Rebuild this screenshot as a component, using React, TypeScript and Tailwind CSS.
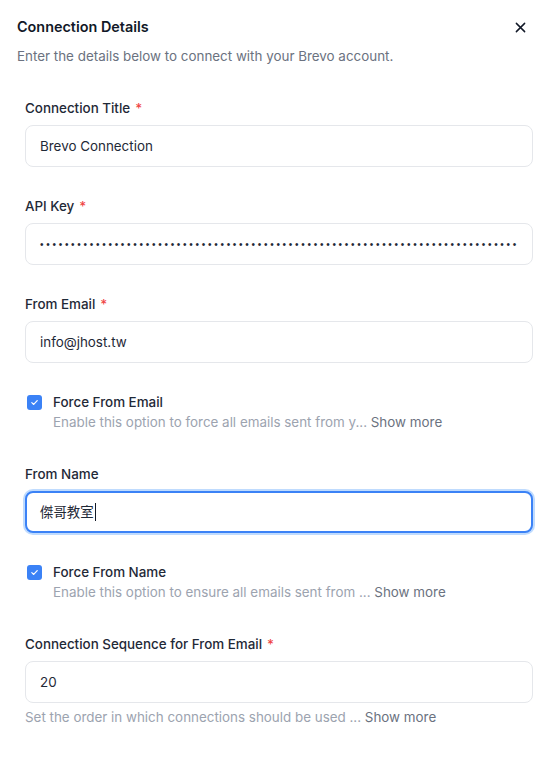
import React from "react";

const font = { fontFamily: "Inter, 'Noto Sans CJK TC', sans-serif" };

function Label({ text, required }: { text: string; required?: boolean }) {
  return (
    <div className="text-[13.4px] leading-5 font-[450] text-[#1f2937] mb-[7px]">
      {text}
      {required && <span className="text-[#ef4444] ml-[5px]">*</span>}
    </div>
  );
}

function Input({ value }: { value: string }) {
  return (
    <div className="h-[42px] rounded-[8px] border border-[#e5e7eb] bg-white px-[14px] flex items-center text-[13.4px] text-[#1f2937]">
      {value}
    </div>
  );
}

function Check({ title, desc }: { title: string; desc: string }) {
  return (
    <div className="flex items-start gap-[11px] pl-[2px]">
      <div className="mt-[3px] w-[15px] h-[15px] rounded-[3px] bg-[#3b82f6] flex items-center justify-center shrink-0">
        <svg width="9" height="9" viewBox="0 0 10 10" fill="none">
          <path d="M2 5.2 L4.1 7.2 L8 2.8" stroke="white" strokeWidth="1.3" strokeLinecap="round" strokeLinejoin="round" />
        </svg>
      </div>
      <div>
        <div className="text-[13.4px] leading-5 font-[450] text-[#1f2937]">{title}</div>
        <div className="text-[13.4px] leading-5 text-[#9ca3af]">
          {desc} <span className="text-[#6b7280]">Show more</span>
        </div>
      </div>
    </div>
  );
}

export default function App() {
  return (
    <div className="w-[552px] h-[760px] bg-white overflow-hidden" style={font}>
      <div className="pl-[17px] pr-[26px] pt-[17px]">
        <div className="flex items-center justify-between h-5">
          <div className="text-[14.4px] font-semibold text-[#111827]">Connection Details</div>
          <svg width="11" height="11" viewBox="0 0 12 12" fill="none">
            <path d="M1.5 1.5 L10.5 10.5 M10.5 1.5 L1.5 10.5" stroke="#111827" strokeWidth="1.6" strokeLinecap="round" />
          </svg>
        </div>
        <div className="mt-[9px] text-[13.4px] leading-5 text-[#6b7280]">
          Enter the details below to connect with your Brevo account.
        </div>
      </div>
      <div className="pl-[25px] pr-[19px] pt-[32px] flex flex-col gap-[29px]">
        <div>
          <Label text="Connection Title" required />
          <Input value="Brevo Connection" />
        </div>
        <div>
          <Label text="API Key" required />
          <div className="h-[42px] rounded-[8px] border border-[#e5e7eb] bg-white pl-[14px] pr-[10px] flex items-center overflow-hidden">
            <div className="whitespace-nowrap text-[#1f2937] text-[10px] tracking-[2.72px]" style={{ fontFamily: "'Liberation Sans', sans-serif" }}>
              {"•".repeat(77)}
            </div>
          </div>
        </div>
        <div>
          <Label text="From Email" required />
          <Input value="info@jhost.tw" />
        </div>
        <Check
          title="Force From Email"
          desc="Enable this option to force all emails sent from y..."
        />
        <div className="mt-[3px]">
          <Label text="From Name" />
          <div className="h-[42px] rounded-[8px] border-2 border-[#3b82f6] ring-2 ring-[#bfdbfe] bg-white px-[13px] flex items-center text-[13.4px] text-[#1f2937]">
            傑哥教室<span className="inline-block w-px h-[18px] bg-[#111827] ml-[1px]" />
          </div>
        </div>
        <Check
          title="Force From Name"
          desc="Enable this option to ensure all emails sent from ..."
        />
        <div className="mt-[3px]">
          <Label text="Connection Sequence for From Email" required />
          <Input value="20" />
          <div className="mt-[4px] text-[13.4px] leading-5 text-[#9ca3af]">
            Set the order in which connections should be used ... <span className="text-[#6b7280]">Show more</span>
          </div>
        </div>
      </div>
    </div>
  );
}
